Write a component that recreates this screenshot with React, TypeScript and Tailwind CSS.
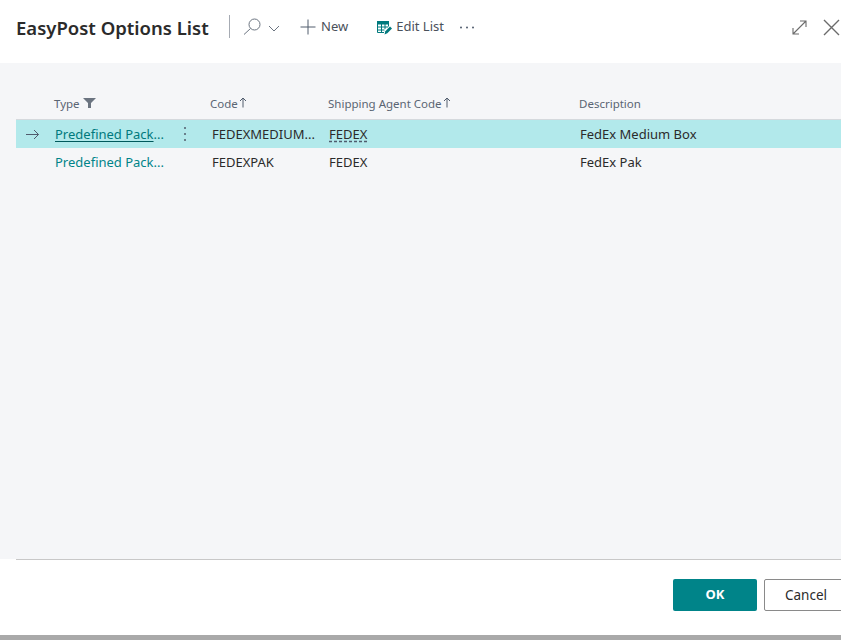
import { ReactNode } from "react";

const font = { fontFamily: '"Noto Sans", "Open Sans", sans-serif' };

function HeaderCell({ className, children }: { className: string; children: ReactNode }) {
  return <div className={`flex items-center text-[11.5px] text-[#5a6573] ${className}`}>{children}</div>;
}

function SortArrow() {
  return (
    <svg width="8" height="11" viewBox="0 0 8 11" className="ml-[1px] -mt-[2px]" fill="none" stroke="#505c6d" strokeWidth="1">
      <path d="M4 10.5V1M1 4l3-3 3 3" />
    </svg>
  );
}

function Row({ selected, code, agent, description }: { selected?: boolean; code: string; agent: string; description: string }) {
  return (
    <div className={`flex h-[28px] items-center pt-[2px] text-[13px] text-[#2b2b2b] ${selected ? "bg-[#b2e9eb]" : ""}`}>
      <div className="flex w-[38px] items-center pl-[9px]">
        {selected && (
          <svg width="15" height="11" viewBox="0 0 15 11" fill="none" stroke="#505c6d" strokeWidth="1" className="-mt-[2px]">
            <path d="M1 5.5h12.5M9 1l4.5 4.5L9 10" />
          </svg>
        )}
      </div>
      <div className="w-[114px] pl-[1px] whitespace-nowrap">
        {selected ? (
          <span className="text-[#00797d]">
            <span className="underline decoration-[#00595c] underline-offset-2">Predefined Pack</span>...
          </span>
        ) : (
          <span className="text-[#008489]">Predefined Pack...</span>
        )}
      </div>
      <div className="flex w-[34px] justify-center">
        {selected && (
          <svg width="4" height="16" viewBox="0 0 4 16" fill="#505c6d" className="-mt-[2px]">
            <circle cx="2" cy="2" r="1" />
            <circle cx="2" cy="8" r="1" />
            <circle cx="2" cy="14" r="1" />
          </svg>
        )}
      </div>
      <div className="ml-[10px] w-[117px] whitespace-nowrap">{code}</div>
      <div className="w-[251px]">
        <span className={selected ? "underline decoration-dashed decoration-[#505c6d] underline-offset-2" : ""}>{agent}</span>
      </div>
      <div className="whitespace-nowrap">{description}</div>
    </div>
  );
}

export default function App() {
  return (
    <div className="flex h-[640px] w-[841px] flex-col overflow-hidden bg-white" style={font}>
      <header className="flex h-[63px] items-start bg-white">
        <h1 className="mt-[14px] ml-[16px] w-[192px] whitespace-nowrap text-[18.5px] font-semibold leading-[28px] text-[#2b2b2b]">EasyPost Options List</h1>
        <div className="mt-[15px] ml-[21px] h-[23px] w-px bg-[#a6abb3]" />
        <div className="mt-[18px] ml-[13px] flex items-center">
          <svg width="18" height="17" viewBox="0 0 18 17" fill="none" stroke="#6b7480" strokeWidth="1">
            <circle cx="11.5" cy="6.5" r="5.5" />
            <path d="M7.5 10.5L1 16.5" />
          </svg>
          <svg width="12" height="7" viewBox="0 0 12 7" fill="none" stroke="#6b7480" strokeWidth="1" className="ml-[7px] mt-[3px]">
            <path d="M1 1l5 5 5-5" />
          </svg>
        </div>
        <div className="mt-[18px] ml-[20px] flex h-[18px] items-center text-[13px] text-[#4a515b]">
          <svg width="16" height="16" viewBox="0 0 16 16" fill="none" stroke="#505c6d" strokeWidth="1" className="mr-[5px]">
            <path d="M8 .5v15M.5 8h15" />
          </svg>
          New
        </div>
        <div className="mt-[18px] ml-[29px] flex h-[18px] items-center text-[13px] text-[#4a515b]">
          <svg width="15" height="15" viewBox="0 0 15 15" className="mr-[4px]">
            <path d="M0 1h12v3.5H0z" fill="#00797d" />
            <path d="M.5 4v8.5H7M11.5 4v2.5M4.5 4v8.5M8 4v5M.5 7h10.5M.5 10h7" fill="none" stroke="#00797d" strokeWidth="1" />
            <path d="M7.5 14.5l.8-3.2 4.7-4.8 2 2-4.7 4.8z" fill="#00797d" />
          </svg>
          Edit List
        </div>
        <svg width="16" height="3" viewBox="0 0 16 3" fill="#505c6d" className="mt-[26px] ml-[15px]">
          <circle cx="2" cy="1.5" r="1" />
          <circle cx="8" cy="1.5" r="1" />
          <circle cx="14" cy="1.5" r="1" />
        </svg>
        <div className="ml-auto mt-[19px] flex items-start">
          <svg width="15" height="15" viewBox="0 0 15 15" fill="none" stroke="#6b6b6b" strokeWidth="1.1" className="mt-[1px]">
            <path d="M1 14L14 1M8 1h6v6M1 8v6h6" />
          </svg>
          <svg width="17" height="17" viewBox="0 0 17 17" fill="none" stroke="#6b6b6b" strokeWidth="1.4" className="ml-[16px] mr-[1px]">
            <path d="M1 1l15 15M16 1L1 16" />
          </svg>
        </div>
      </header>

      <main className="h-[496px] bg-[#f5f6f8] pl-[16px] pt-[30px]">
        <div className="flex h-[26px] items-center pb-[5px]">
          <HeaderCell className="w-[194px] pl-[38px]">
            Type
            <svg width="13" height="10" viewBox="0 0 13 10" fill="#6b7480" className="ml-[3px] -mt-[2px]">
              <path d="M0 0h13L8 5v5H5V5z" />
            </svg>
          </HeaderCell>
          <HeaderCell className="w-[118px]">
            Code
            <SortArrow />
          </HeaderCell>
          <HeaderCell className="w-[251px]">
            Shipping Agent Code
            <SortArrow />
          </HeaderCell>
          <HeaderCell className="flex-1">Description</HeaderCell>
        </div>
        <div className="border-t border-[#d5d9dd]" />
        <Row selected code="FEDEXMEDIUM..." agent="FEDEX" description="FedEx Medium Box" />
        <Row code="FEDEXPAK" agent="FEDEX" description="FedEx Pak" />
      </main>

      <footer className="ml-[16px] flex h-[76px] items-start border-t border-[#c8c8c8] bg-white pt-[19px] pl-[657px]">
        <button className="h-[32px] w-[84px] shrink-0 rounded-[2px] bg-[#008489] text-[13px] font-bold text-white">OK</button>
        <button className="ml-[7px] h-[32px] w-[84px] shrink-0 rounded-[2px] border border-[#8a8a8a] bg-white text-[13.5px] text-[#2b2b2b]">Cancel</button>
      </footer>
      <div className="h-[5px] bg-[#a9a9a9]" />
    </div>
  );
}
